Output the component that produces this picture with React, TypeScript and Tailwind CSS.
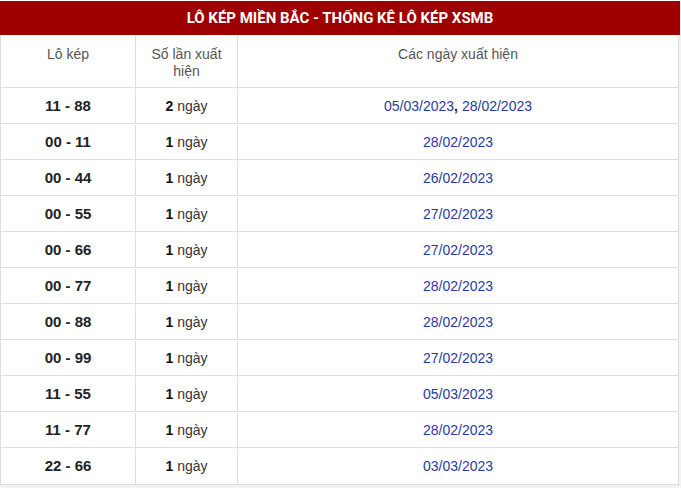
import React from "react";

const rows: { pair: string; count: number; dates: string[] }[] = [
  { pair: "11 - 88", count: 2, dates: ["05/03/2023", "28/02/2023"] },
  { pair: "00 - 11", count: 1, dates: ["28/02/2023"] },
  { pair: "00 - 44", count: 1, dates: ["26/02/2023"] },
  { pair: "00 - 55", count: 1, dates: ["27/02/2023"] },
  { pair: "00 - 66", count: 1, dates: ["27/02/2023"] },
  { pair: "00 - 77", count: 1, dates: ["28/02/2023"] },
  { pair: "00 - 88", count: 1, dates: ["28/02/2023"] },
  { pair: "00 - 99", count: 1, dates: ["27/02/2023"] },
  { pair: "11 - 55", count: 1, dates: ["05/03/2023"] },
  { pair: "11 - 77", count: 1, dates: ["28/02/2023"] },
  { pair: "22 - 66", count: 1, dates: ["03/03/2023"] },
];

export default function App() {
  return (
    <div className="w-[681px] h-[488px] bg-[#f2f2f2] overflow-hidden font-['Liberation_Sans',Arial,sans-serif] text-[14px]">
      <div className="w-[679px] bg-white">
        <div className="h-[36px] pt-px">
          <div className="h-[34px] bg-[#9e0000] text-white font-bold flex items-center justify-center font-['Roboto',sans-serif] text-[15px] w-[680px]">
            LÔ KÉP MIỀN BẮC - THỐNG KÊ LÔ KÉP XSMB
          </div>
        </div>
        <div className="border-x border-b border-[#dedede]">
          <div className="grid grid-cols-[134px_102px_1fr] h-[52px] border-b border-[#dedede] text-[#555] leading-[17px]">
            <div className="pt-[10px] text-center">Lô kép</div>
            <div className="pt-[10px] text-center border-l border-[#dedede] px-2">Số lần xuất hiện</div>
            <div className="pt-[10px] text-center border-l border-[#dedede]">Các ngày xuất hiện</div>
          </div>
          {rows.map((r, i) => (
            <div
              key={r.pair}
              className={
                "grid grid-cols-[134px_102px_1fr] h-[36px] items-stretch pt-px " +
                (i < rows.length - 1 ? "border-b border-[#dedede]" : "")
              }
            >
              <div className="flex items-center justify-center font-bold text-[#222] text-[15px]">{r.pair}</div>
              <div className="flex items-center justify-center border-l border-[#dedede] text-[#333]">
                <b className="text-[#111] mr-1">{r.count}</b>ngày
              </div>
              <div className="flex items-center justify-center border-l border-[#dedede] text-[#2a3a9f]">
                {r.dates.map((d, j) => (
                  <span key={d}>
                    {j > 0 && <b className="text-[#222] mr-1">,</b>}
                    {d}
                  </span>
                ))}
              </div>
            </div>
          ))}
        </div>
      </div>
    </div>
  );
}
